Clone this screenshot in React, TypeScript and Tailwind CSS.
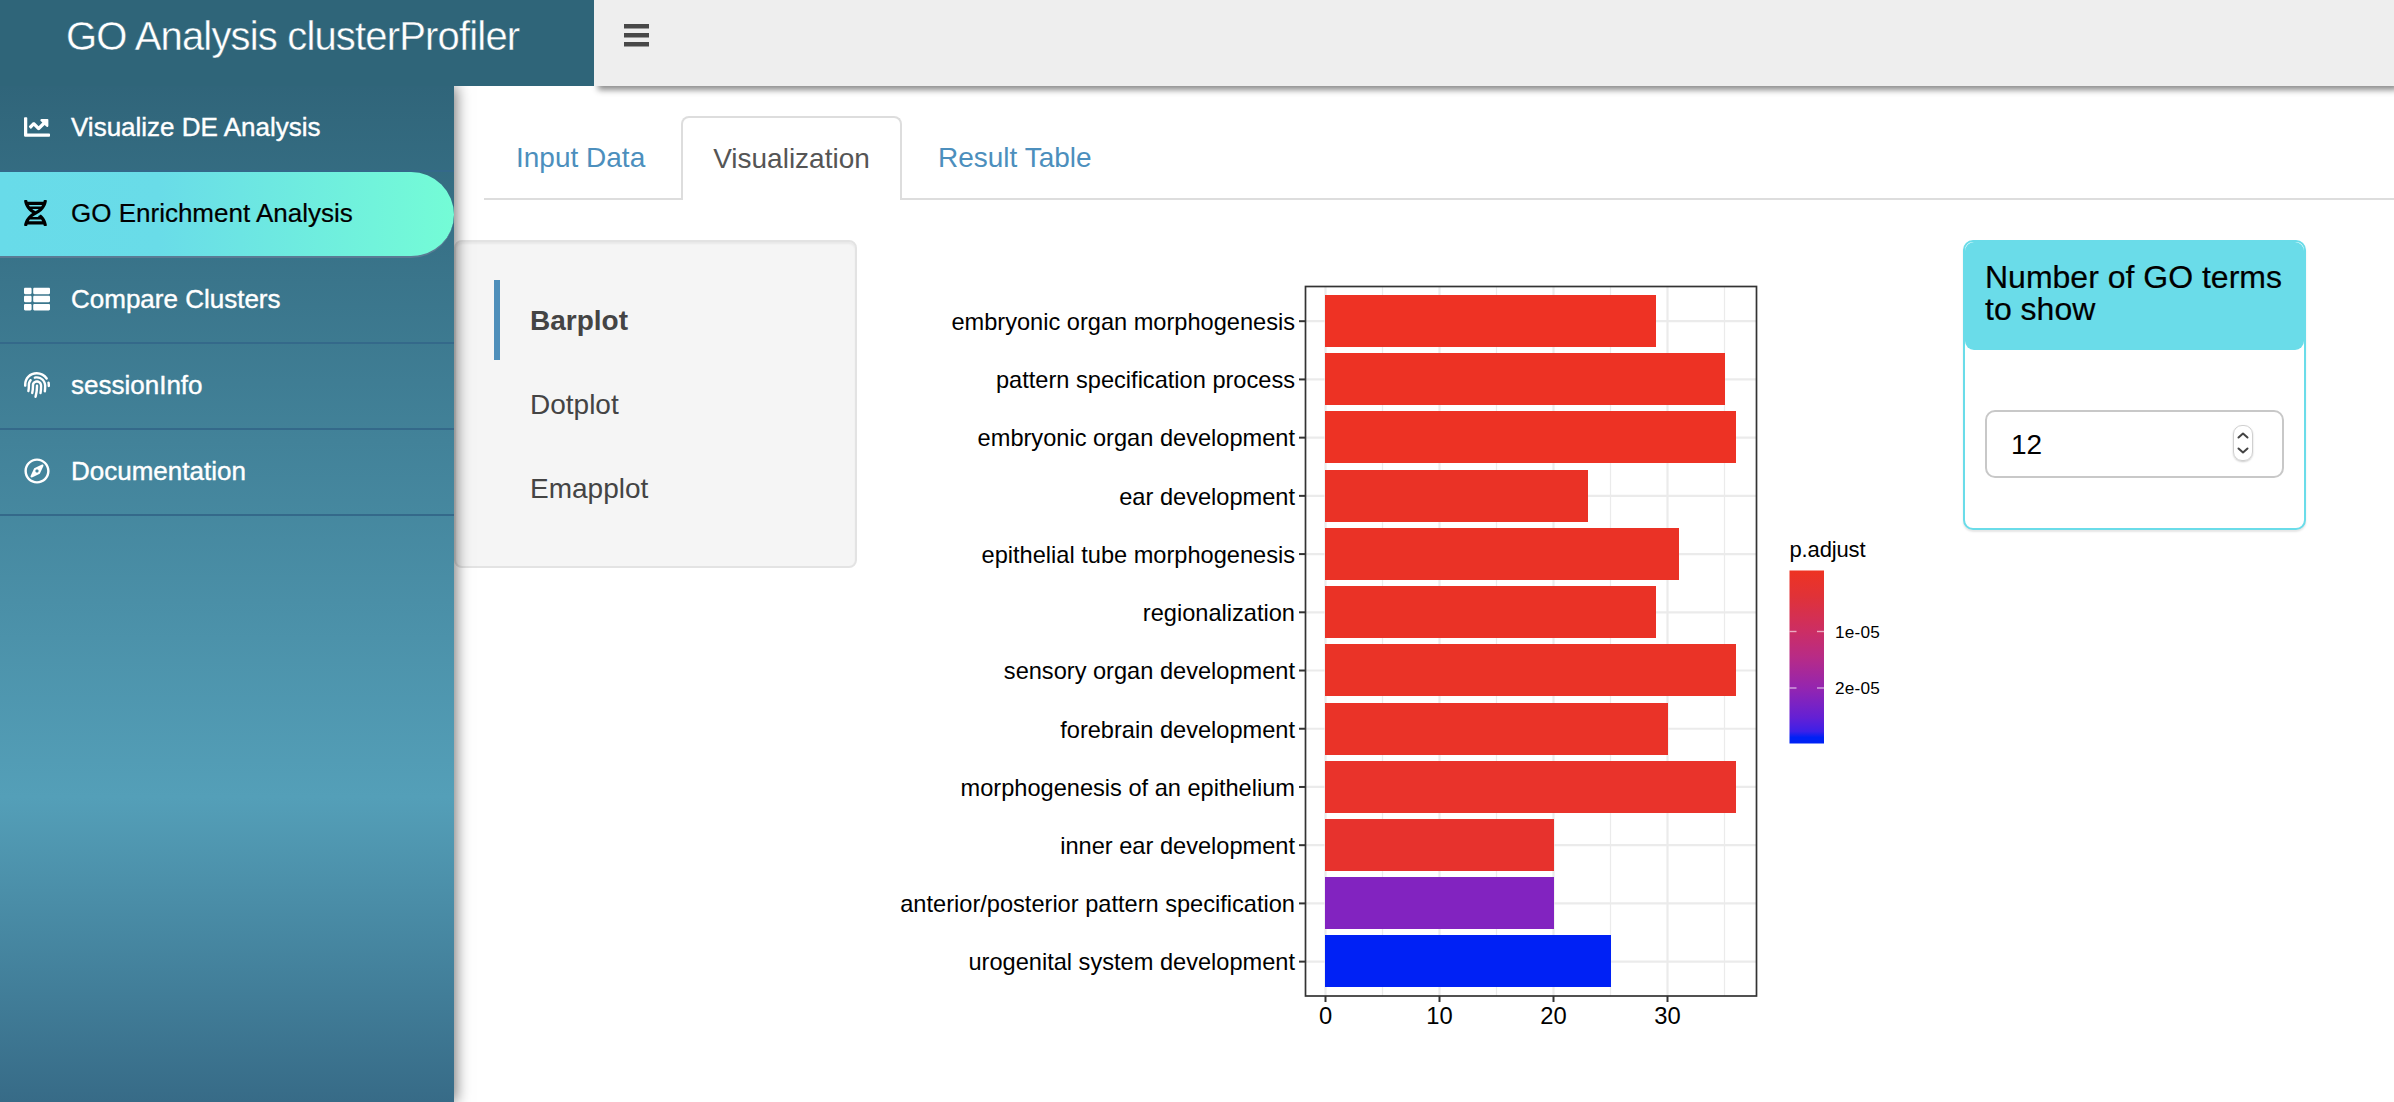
import { FaChartLine, FaDna, FaFingerprint, FaRegCompass, FaThList } from "react-icons/fa";

const menu = [
  { label: "Visualize DE Analysis", Icon: FaChartLine },
  { label: "GO Enrichment Analysis", Icon: FaDna, active: true },
  { label: "Compare Clusters", Icon: FaThList },
  { label: "sessionInfo", Icon: FaFingerprint },
  { label: "Documentation", Icon: FaRegCompass },
];

const terms = [
  { label: "embryonic organ morphogenesis", count: 29, color: "#ee3224" },
  { label: "pattern specification process", count: 35, color: "#ed3224" },
  { label: "embryonic organ development", count: 36, color: "#ed3224" },
  { label: "ear development", count: 23, color: "#ea3226" },
  { label: "epithelial tube morphogenesis", count: 31, color: "#ea3226" },
  { label: "regionalization", count: 29, color: "#ea3226" },
  { label: "sensory organ development", count: 36, color: "#ea3327" },
  { label: "forebrain development", count: 30, color: "#ea3328" },
  { label: "morphogenesis of an epithelium", count: 36, color: "#e9332b" },
  { label: "inner ear development", count: 20, color: "#e7322d" },
  { label: "anterior/posterior pattern specification", count: 20, color: "#8223c0" },
  { label: "urogenital system development", count: 25, color: "#0021f5" },
];

const X0 = 445.5;
const UNIT = 11.4;
const rowY = (i: number) => 61.2 + i * 58.22;

function BarPlot() {
  return (
    <svg width="1040" height="780" viewBox="0 0 1040 780" fontFamily="'Liberation Sans', Arial, sans-serif" className="block shrink-0">
      {[5, 15, 25, 35].map((v) => (
        <line key={v} x1={X0 + v * UNIT} x2={X0 + v * UNIT} y1="27" y2="736" stroke="#ebebeb" strokeWidth="1.2" />
      ))}
      {[0, 10, 20, 30].map((v) => (
        <line key={v} x1={X0 + v * UNIT} x2={X0 + v * UNIT} y1="27" y2="736" stroke="#ebebeb" strokeWidth="2.2" />
      ))}
      {terms.map((t, i) => (
        <g key={t.label}>
          <line x1="426" x2="877" y1={rowY(i)} y2={rowY(i)} stroke="#ebebeb" strokeWidth="2.2" />
          <rect x="445" y={Math.round(rowY(i) - 26.2)} width={Math.round(t.count * UNIT + 0.5)} height="52" fill={t.color} />
          <line x1="419" x2="425" y1={rowY(i)} y2={rowY(i)} stroke="#333" strokeWidth="2" />
          <text x="415" y={rowY(i) + 8.8} fontSize="23.6" textAnchor="end">{t.label}</text>
        </g>
      ))}
      <rect x="425.5" y="26.5" width="451" height="709.5" fill="none" stroke="#333" strokeWidth="1.7" />
      {[0, 10, 20, 30].map((v) => (
        <g key={v}>
          <line x1={X0 + v * UNIT} x2={X0 + v * UNIT} y1="736" y2="742" stroke="#333" strokeWidth="2" />
          <text x={X0 + v * UNIT} y="764.3" fontSize="23.75" textAnchor="middle">{v}</text>
        </g>
      ))}
      <defs>
        <linearGradient id="padjust" x1="0" y1="0" x2="0" y2="1">
          <stop offset="0" stopColor="#ee3322" />
          <stop offset="0.15" stopColor="#e03238" />
          <stop offset="0.35" stopColor="#cc2e64" />
          <stop offset="0.5" stopColor="#b82b86" />
          <stop offset="0.68" stopColor="#9425b0" />
          <stop offset="0.85" stopColor="#6420d4" />
          <stop offset="0.93" stopColor="#3d20e8" />
          <stop offset="0.965" stopColor="#0021f5" />
          <stop offset="1" stopColor="#0021f5" />
        </linearGradient>
      </defs>
      <text x="909.5" y="296.7" fontSize="22" textLength="76">p.adjust</text>
      <rect x="909.5" y="310.5" width="34.5" height="173" fill="url(#padjust)" />
      {[371.5, 428].map((y) => (
        <g key={y} stroke="#fff" strokeOpacity="0.6" strokeWidth="1.4">
          <line x1="909.5" x2="916.5" y1={y} y2={y} />
          <line x1="937" x2="944" y1={y} y2={y} />
        </g>
      ))}
      <text x="1000" y="377.5" fontSize="17.2" textAnchor="end" letterSpacing="0.2">1e-05</text>
      <text x="1000" y="434" fontSize="17.2" textAnchor="end" letterSpacing="0.2">2e-05</text>
    </svg>
  );
}

export default function App() {
  return (
    <div className="flex h-[1102px] w-full flex-col overflow-hidden bg-white font-['Liberation_Sans',Arial,sans-serif] text-[28px] leading-[40px]">
      <header className="relative z-20 flex h-[86px] shrink-0">
        <div className="z-10 flex w-[594px] shrink-0 items-start bg-[#2f6579] pl-[66px] pt-[12px] text-[40px] leading-[48px] tracking-[-0.83px] whitespace-nowrap text-white [-webkit-text-stroke:0.4px_#2f6579]">
          GO Analysis clusterProfiler
        </div>
        <div className="flex grow bg-[#eeeeee] pl-[30px] pt-[24px] shadow-[4px_4px_6px_rgba(0,0,0,0.45)]">
          <svg width="25" height="23" viewBox="0 0 25 23" fill="#484848">
            <rect width="25" height="4.5" />
            <rect y="9" width="25" height="4.5" />
            <rect y="18" width="25" height="4.5" />
          </svg>
        </div>
      </header>

      <div className="flex min-h-0 grow">
        <aside className="relative z-10 w-[454px] shrink-0 bg-[linear-gradient(180deg,#30657a_0%,#549fb8_70%,#376b87_100%)] shadow-[2px_0_14px_rgba(0,0,0,0.55)]">
          {menu.map(({ label, Icon, active }) =>
            active ? (
              <div key={label} className="flex h-[86px] items-center rounded-r-[43px] border-b-2 border-[#5a7b94] bg-[linear-gradient(90deg,#68dbe9_0%,#69dce8_35%,#74fcd6_100%)] pb-[2px] pl-6 text-[26px] text-black [-webkit-text-stroke:0.2px_black]">
                <Icon className="h-[26px] w-[23px]" />
                <span className="ml-6">{label}</span>
              </div>
            ) : (
              <div key={label} className="flex h-[86px] items-center border-b-2 border-[#34698a] pb-[2px] pl-6 text-[26px] text-white [-webkit-text-stroke:0.4px_white]">
                <Icon className="size-[26px] [stroke-width:0]" />
                <span className="ml-[21px]">{label}</span>
              </div>
            ),
          )}
        </aside>

        <main className="flex min-w-0 grow flex-col">
          <nav className="ml-[30px] mt-[30px] flex h-[84px] shrink-0 items-end border-b-2 border-[#dddddd] text-[#4c8fbd]">
            <div className="flex h-[82px] w-[197px] items-center pl-8 pt-[2px]">Input Data</div>
            <div className="-mb-[2px] flex h-[84px] w-[221px] items-center justify-center rounded-t-lg border-2 border-b-0 border-[#dddddd] bg-white text-[#555555]">
              Visualization
            </div>
            <div className="flex h-[82px] items-center pl-9 pt-[2px]">Result Table</div>
          </nav>

          <div className="mt-[40px] flex items-start">
            <section className="h-[328px] w-[403px] shrink-0 rounded-lg border-2 border-[#e3e3e3] bg-[#f5f5f5] pl-[38px] pt-[38px] text-[#444444] shadow-[inset_0_2px_2px_rgba(0,0,0,0.05)]">
              <div className="flex h-[80px] items-center border-l-[6px] border-[#4f8fba] pl-[30px] pt-[2px] font-bold">Barplot</div>
              <div className="mt-1 flex h-[80px] items-center border-l-[6px] border-transparent pl-[30px] pt-[2px]">Dotplot</div>
              <div className="mt-1 flex h-[80px] items-center border-l-[6px] border-transparent pl-[30px] pt-[2px]">Emapplot</div>
            </section>

            <div className="ml-[23px] mt-[20px] shrink-0">
              <BarPlot />
            </div>

            <section className="ml-[43px] h-[290px] w-[343px] shrink-0 rounded-[10px] border-2 border-[#6adce9] bg-white shadow-[0_2px_2px_rgba(0,0,0,0.1)]">
              <h3 className="h-[108px] rounded-[9px] bg-[#6adce9] px-5 pt-[19px] text-[32px] leading-[32px] text-black [-webkit-text-stroke:0.2px_black]">
                Number of GO terms to show
              </h3>
              <div className="mx-5 mt-[60px] flex h-[68px] items-center justify-between rounded-[10px] border-2 border-[#c8c8c8] pl-6 pr-[29px] text-black">
                <span className="pt-px">12</span>
                <div className="-mt-[2px] flex h-[36px] w-[20px] flex-col items-center justify-between rounded-[9px] border border-[#d0d0d0] py-[6px] shadow-[0_1px_2px_rgba(0,0,0,0.2)]">
                  <svg width="12" height="7" viewBox="0 0 12 7" fill="none" stroke="#444" strokeWidth="2" strokeLinecap="round" strokeLinejoin="round">
                    <path d="M1.5 5.5 6 1.5l4.5 4" />
                  </svg>
                  <svg width="12" height="7" viewBox="0 0 12 7" fill="none" stroke="#444" strokeWidth="2" strokeLinecap="round" strokeLinejoin="round">
                    <path d="M1.5 1.5l4.5 4 4.5-4" />
                  </svg>
                </div>
              </div>
            </section>
          </div>
        </main>
      </div>
    </div>
  );
}
